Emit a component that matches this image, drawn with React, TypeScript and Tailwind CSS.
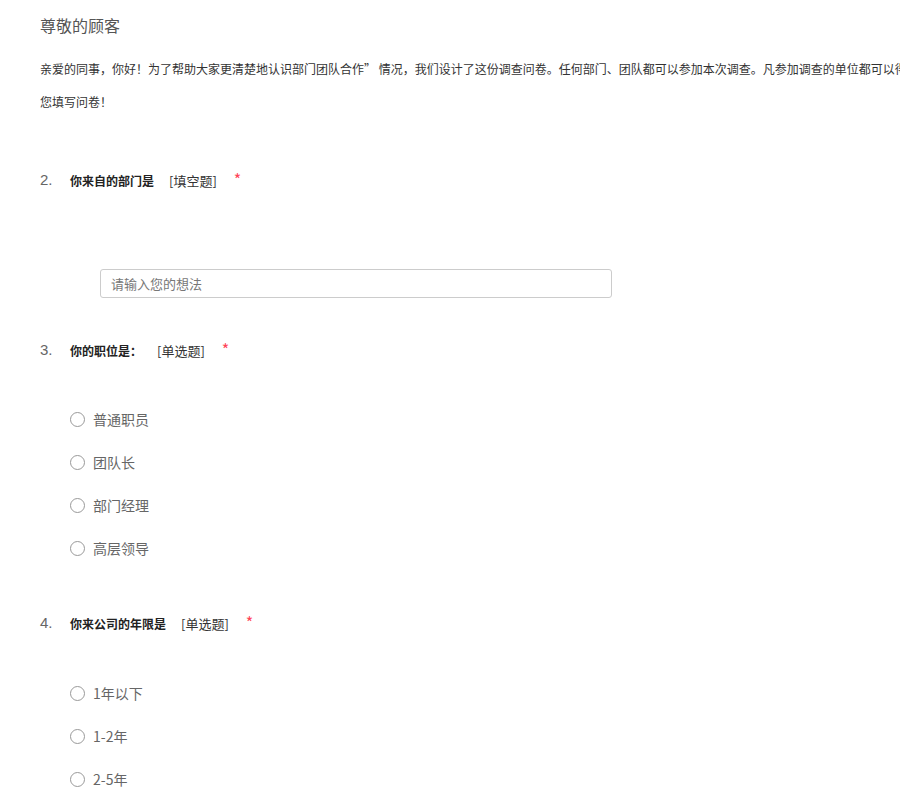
import React from "react";

const font = { fontFamily: '"Microsoft YaHei", "Noto Sans CJK SC", "Liberation Sans", sans-serif' };

type Q = { no: number; title: string; kind: string };

const QuestionHead: React.FC<{ q: Q }> = ({ q }) => (
  <div className="flex items-center h-[20px]">
    <span className="w-[30px] text-[15px] text-[#666] leading-none -mt-[4px]" style={{ fontFamily: '"Liberation Sans", sans-serif' }}>
      {q.no}.
    </span>
    <span className="text-[12px] font-bold text-[#222]">{q.title}</span>
    <span className="ml-[15px] text-[13px] text-[#333]">[{q.kind}]</span>
    <span className="ml-[17px] text-[16px] leading-none text-[#f45] -mt-[4px]">*</span>
  </div>
);

const Radio: React.FC<{ label: string }> = ({ label }) => (
  <label className="flex items-center h-[20px]">
    <span className="w-[15px] h-[15px] rounded-full border border-[#999] bg-white" />
    <span className="ml-[8px] text-[14px] text-[#666]">{label}</span>
  </label>
);

export default function App() {
  return (
    <div className="w-[900px] h-[800px] overflow-hidden bg-white" style={font}>
      <div className="pl-[40px] pt-[15px]">
        <h1 className="text-[16px] leading-[20px] text-[#555] font-normal">尊敬的顾客</h1>
        <p className="mt-[17px] w-[1100px] text-[12px] leading-[33px] text-[#333]">
          亲爱的同事，你好！为了帮助大家更清楚地认识部门团队合作” 情况，我们设计了这份调查问卷。任何部门、团队都可以参加本次调查。凡参加调查的单位都可以得到一份小礼品，感谢
          <br />
          您填写问卷！
        </p>

        {/* 第2题 */}
        <div className="mt-[53px]">
          <QuestionHead q={{ no: 2, title: "你来自的部门是", kind: "填空题" }} />
          <div className="mt-[78px] ml-[60px]">
            <input
              className="w-[512px] h-[29px] rounded-[3px] border border-[#ccc] px-[10px] text-[13px] text-[#333] placeholder:text-[#777] outline-none"
              placeholder="请输入您的想法"
            />
          </div>
        </div>

        {/* 第3题 */}
        <div className="mt-[43px]">
          <QuestionHead q={{ no: 3, title: "你的职位是：", kind: "单选题" }} />
          <div className="mt-[48px] ml-[30px] flex flex-col gap-[23px]">
            <Radio label="普通职员" />
            <Radio label="团队长" />
            <Radio label="部门经理" />
            <Radio label="高层领导" />
          </div>
        </div>

        {/* 第4题 */}
        <div className="mt-[56px]">
          <QuestionHead q={{ no: 4, title: "你来公司的年限是", kind: "单选题" }} />
          <div className="mt-[49px] ml-[30px] flex flex-col gap-[23px]">
            <Radio label="1年以下" />
            <Radio label="1-2年" />
            <Radio label="2-5年" />
          </div>
        </div>
      </div>
    </div>
  );
}
